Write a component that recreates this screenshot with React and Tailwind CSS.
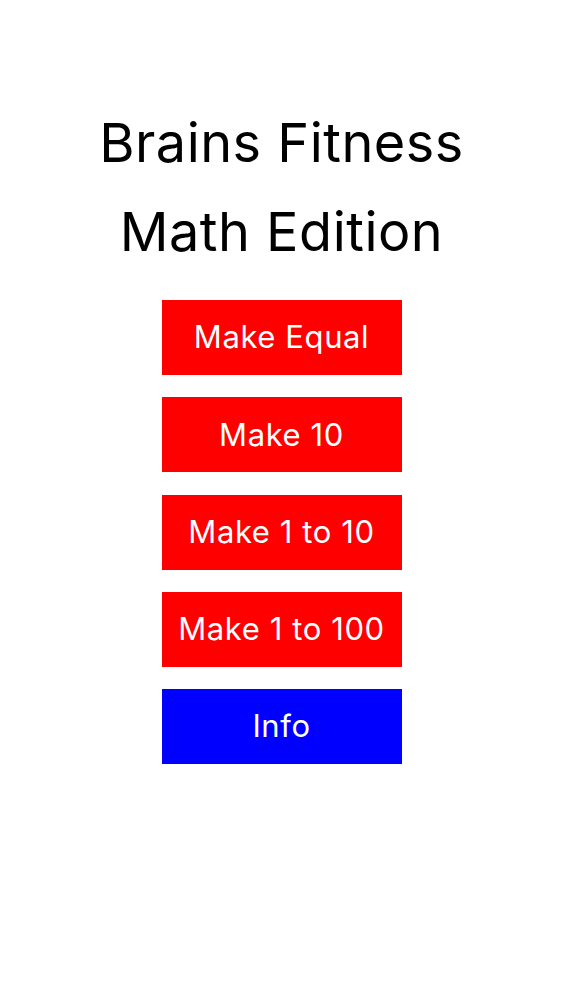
export default function App() {
  const buttons = [
    { label: "Make Equal", cls: "bg-[#ff0000]" },
    { label: "Make 10", cls: "bg-[#ff0000]" },
    { label: "Make 1 to 10", cls: "bg-[#ff0000]" },
    { label: "Make 1 to 100", cls: "bg-[#ff0000]" },
    { label: "Info", cls: "bg-[#0000ff]" },
  ];
  return (
    <div
      className="w-[563px] h-[1000px] bg-white flex flex-col items-center"
      style={{ fontFamily: "Inter, 'Noto Sans', sans-serif" }}
    >
      <div className="mt-[98px] flex flex-col items-center text-[54px] leading-[89px] text-black tracking-[0.5px]">
        <div>Brains Fitness</div>
        <div>Math Edition</div>
      </div>
      <div className="mt-[24px] flex flex-col gap-[22.25px]">
        {buttons.map((b) => (
          <div
            key={b.label}
            className={`w-[240px] h-[75px] flex items-center justify-center text-white text-[31px] tracking-[0.6px] ${b.cls}`}
          >
            {b.label}
          </div>
        ))}
      </div>
    </div>
  );
}
